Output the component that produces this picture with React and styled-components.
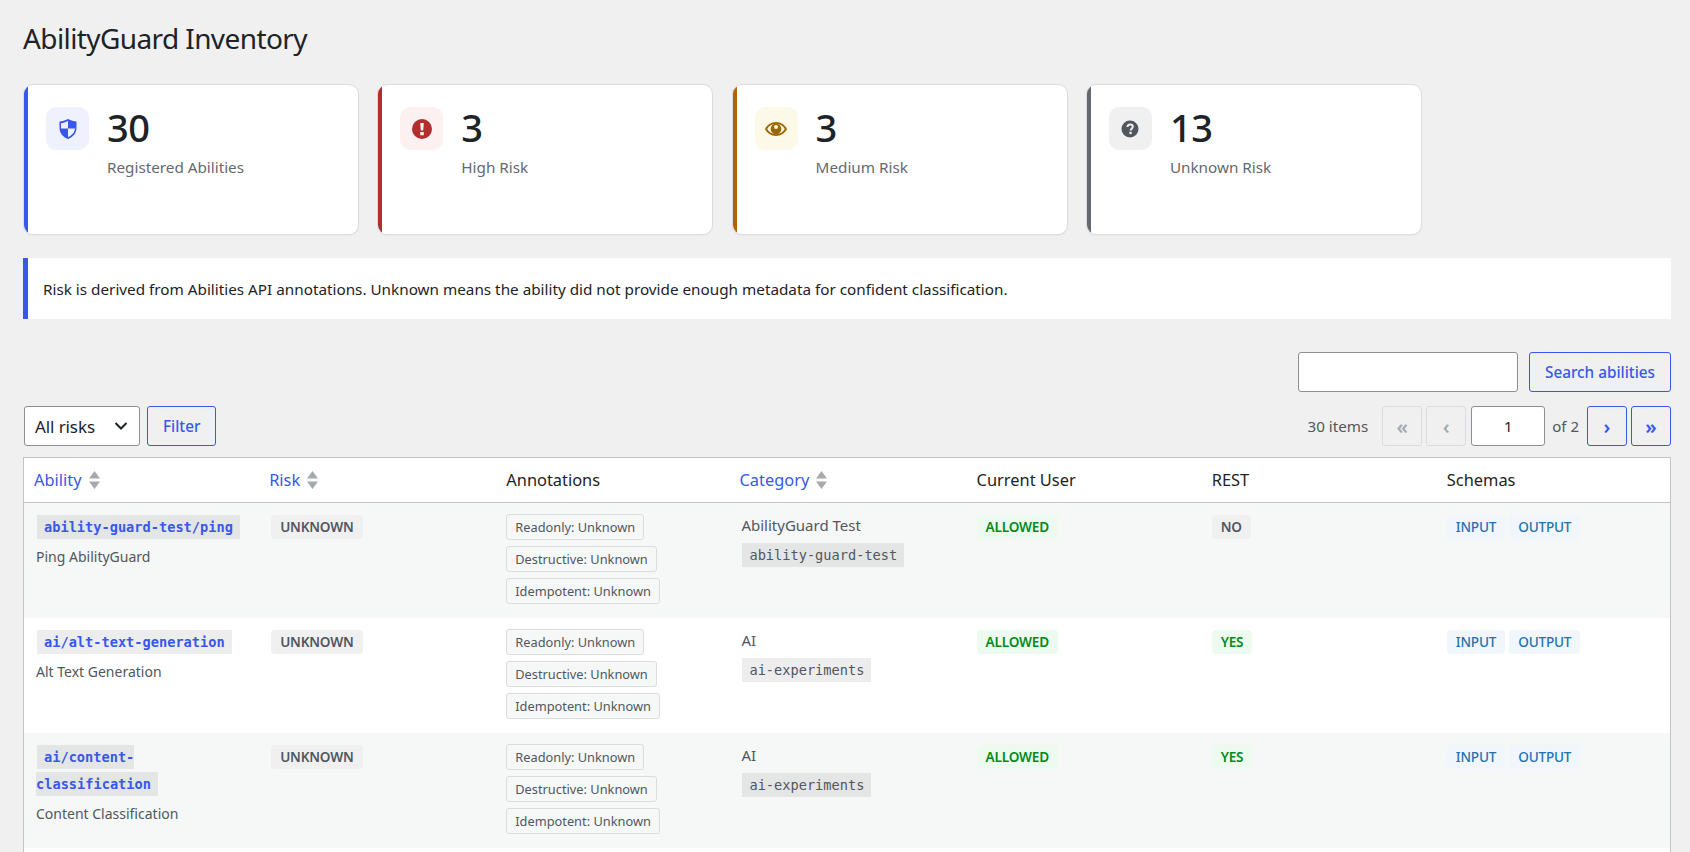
import React from 'react';
import styled, { createGlobalStyle } from 'styled-components';

const Global = createGlobalStyle`
  html, body { margin: 0; padding: 0; height: 852px; overflow: hidden; background: #f0f0f1; }
  * { box-sizing: border-box; }
  body { font-family: "Noto Sans", "Open Sans", sans-serif; color: #1d2327; }
`;
const Page = styled.div`
  height: 852px; display: flex; flex-direction: column; padding: 0 19px 0 23px; overflow: hidden;
`;
const Title = styled.h1`
  margin: 0; padding: 17px 0 0; height: 84px; font-size: 28px; font-weight: 400; line-height: 42px; color: #1d2327; letter-spacing: -0.6px;
`;
const Cards = styled.div`display: grid; grid-template-columns: repeat(4, 336px); gap: 18.3px;`;
const Card = styled.div`
  position: relative; overflow: hidden;
  height: 151px; background: #fff; border: 1px solid #dcdcde;
  border-radius: 10px; padding: 22px 18px 22px 22px; display: flex; gap: 18px; align-items: flex-start;
  box-shadow: 0 1px 2px rgba(0,0,0,.04);
  &::before { content: ""; position: absolute; left: -1px; top: -1px; bottom: -1px; width: 5px; background: ${p => p.$accent}; }
`;
const IconTile = styled.div`
  width: 43px; height: 43px; border-radius: 10px; background: ${p => p.$bg}; color: ${p => p.$fg};
  display: flex; align-items: center; justify-content: center; flex: none;
`;
const Metric = styled.div`display: flex; flex-direction: column;`;
const Num = styled.div`font-size: 38px; line-height: 41px; font-weight: 500; color: #1d2327; letter-spacing: -0.5px;`;
const Label = styled.div`font-size: 15.25px; line-height: 22px; margin-top: 8px; color: #646970;`;
const Notice = styled.div`
  margin-top: 23px; height: 61px; background: #fff; border-left: 5px solid #3858e9; padding: 0 15px;
  display: flex; align-items: center; font-size: 15.27px; color: #1d2327;
`;
const SearchRow = styled.div`margin-top: 33px; display: flex; justify-content: flex-end; gap: 11px;`;
const TextInput = styled.input`
  height: 40px; width: ${p => p.$w}px; border: 1px solid #8c8f94; border-radius: 3px; background: #fff;
  margin: 0 0 0 ${p => p.$center ? 1 : 0}px;
  font: inherit; font-size: 15px; color: #1d2327; text-align: ${p => p.$center ? 'center' : 'left'}; padding: 0 8px;
`;
const Btn = styled.button`
  height: 40px; min-width: ${p => p.$min || 0}px; padding: 0 ${p => p.$pad ?? 15}px; border-radius: 3px; background: transparent;
  border: 1px solid ${p => p.disabled ? '#dcdcde' : '#3858e9'}; color: ${p => p.disabled ? '#a7aaad' : '#3858e9'};
  font: inherit; font-size: ${p => p.$glyph ? 20 : 15.3}px; font-weight: ${p => p.$glyph ? 600 : 500}; display: inline-flex; align-items: center; justify-content: center;
`;
const ToolRow = styled.div`margin-top: 14px; display: flex; align-items: center; justify-content: space-between;`;
const Left = styled.div`display: flex; gap: 7px; margin-left: 1px;`;
const Right = styled.div`display: flex; align-items: center; gap: 4px; font-size: 15px; color: #50575e;`;
const Count = styled.span`margin-right: 10px; font-size: 15.2px;`;
const Of = styled.span`margin: 0 4px 0 3px;`;
const FakeSelect = styled.div`
  height: 40px; width: 116px; border: 1px solid #8c8f94; border-radius: 3px; background: #fff; color: #1d2327; font-size: 17px; letter-spacing: -0.1px;
  display: flex; align-items: center; justify-content: space-between; padding: 0 11px 0 10px;
`;
const TableWrap = styled.div`
  margin-top: 11px; flex: 1; background: #fff; border: 1px solid #c3c4c7; border-bottom: none; min-height: 0;
`;
const Table = styled.table`width: 100%; table-layout: fixed; border-collapse: collapse;`;
const Th = styled.th`
  height: 44px; text-align: left; font-weight: 400; font-size: 16.4px; padding: 0 10px 0 ${p => p.$link ? 10 : 12}px; border-bottom: 1px solid #c3c4c7;
  color: ${p => p.$link ? '#3858e9' : '#1d2327'};
`;
const ThInner = styled.span`display: inline-flex; align-items: center; gap: 7px;`;
const Tr = styled.tr`background: ${p => p.$alt ? '#f6f7f7' : '#fff'};`;
const Td = styled.td`vertical-align: top; padding: 11px 10px 11px 12px; font-size: 14px; color: #50575e; height: ${p => p.$tall ? 116 : 115}px;`;
const Code = styled.code`
  font-family: "DejaVu Sans Mono", "Liberation Mono", monospace; font-size: 13.65px; line-height: 27px; padding: 4px 7px; margin: 0 1px;
  background: rgba(0,0,0,.07); color: ${p => p.$link ? '#3858e9' : '#50575e'}; font-weight: ${p => p.$link ? 700 : 400};
`;
const Desc = styled.div`margin-top: 5px; line-height: 22px;`;
const Pill = styled.span`
  display: inline-block; height: 24px; line-height: 24px; margin: 1px 4px 0 0; padding: 0 9px; border-radius: 4px; font-size: 13.6px; letter-spacing: -0.2px; font-weight: ${p => p.$w || 600};
  background: ${p => p.$bg}; color: ${p => p.$fg};
`;
const Chips = styled.div`display: flex; flex-direction: column; align-items: flex-start; gap: 6px;`;
const Chip = styled.span`
  height: 26px; line-height: 24px; padding: 0 8px; border: 1px solid #dcdcde; border-radius: 3px; background: #f6f7f7; font-size: 12.8px; color: #50575e;
`;
const CatName = styled.div`font-size: 15px; line-height: 22px; margin-bottom: 6px;`;

const Sort = () => (
  <svg width="11" height="20" viewBox="0 0 11 20" aria-hidden="true">
    <path d="M5.5 1 L11 8.5 H0 Z M0 11.5 H11 L5.5 19 Z" fill="#a7aaad" />
  </svg>
);
const Shield = () => (
  <svg width="20" height="20" viewBox="0 0 20 20">
    <path fillRule="evenodd" fill="currentColor" d="M10 0 C7 1.6 4 2.4 1.5 2.6 V9 C1.5 14 5 18 10 20 C15 18 18.5 14 18.5 9 V2.6 C16 2.4 13 1.6 10 0 Z M10 2 V9.5 H17 C16.6 13.6 13.6 16.6 10 18.1 V9.5 H3 V4.2 C5.2 4 7.6 3.2 10 2 Z" />
  </svg>
);
const Warn = () => (
  <svg width="20" height="20" viewBox="0 0 20 20">
    <path fillRule="evenodd" fill="currentColor" d="M10 0 A10 10 0 1 0 10 20 A10 10 0 1 0 10 0 Z M8.2 4 H11.8 L11.2 11.5 H8.8 Z M8.2 13 H11.8 V16.2 H8.2 Z" />
  </svg>
);
const Eye = () => (
  <svg width="24" height="24" viewBox="0 0 24 24">
    <path fillRule="evenodd" fill="currentColor" d="M12 5 C17 5 21 8 23 12 C21 16 17 19 12 19 C7 19 3 16 1 12 C3 8 7 5 12 5 Z M12 6.8 C8 6.8 5 9 3.2 12 C5 15 8 17.2 12 17.2 C16 17.2 19 15 20.8 12 C19 9 16 6.8 12 6.8 Z" />
    <path fillRule="evenodd" fill="currentColor" d="M12 6.6 A5.4 5.4 0 1 1 12 17.4 A5.4 5.4 0 1 1 12 6.6 Z M12 8 A2 2 0 0 0 12 12 A2 2 0 0 0 12 8 Z" />
  </svg>
);
const Help = () => (
  <svg width="20" height="20" viewBox="0 0 20 20">
    <circle cx="10" cy="10" r="8.5" fill="currentColor" />
    <path d="M7.4 8 C7.4 6.4 8.5 5.5 10.1 5.5 C11.7 5.5 12.8 6.4 12.8 7.8 C12.8 9.5 10.6 9.8 10.6 11.5" fill="none" stroke="#f0f0f1" strokeWidth="2" />
    <rect x="9.4" y="12.8" width="2.3" height="2.3" fill="#f0f0f1" />
  </svg>
);
const Chev = () => (
  <svg width="14" height="10" viewBox="0 0 14 10"><path d="M1.5 2 L7 7.5 L12.5 2" fill="none" stroke="#1d2327" strokeWidth="2" /></svg>
);

const gray = { $bg: '#f0f0f1', $fg: '#50575e' };
const green = { $bg: '#edfaef', $fg: '#008a20' };
const blue = { $bg: '#f0f6fc', $fg: '#2271b1', $w: 500 };

const cards = [
  { n: 30, l: 'Registered Abilities', a: '#3858e9', bg: '#eff2fe', fg: '#3858e9', I: Shield },
  { n: 3, l: 'High Risk', a: '#b32d2e', bg: '#fcf0f1', fg: '#b32d2e', I: Warn },
  { n: 3, l: 'Medium Risk', a: '#b26200', bg: '#fcf9e8', fg: '#996800', I: Eye },
  { n: 13, l: 'Unknown Risk', a: '#646970', bg: '#f0f0f1', fg: '#50575e', I: Help },
];
const rows = [
  { id: 'ability-guard-test/ping', d: 'Ping AbilityGuard', c: 'AbilityGuard Test', s: 'ability-guard-test', rest: 'NO' },
  { id: 'ai/alt-text-generation', d: 'Alt Text Generation', c: 'AI', s: 'ai-experiments', rest: 'YES' },
  { id: 'ai/content-classification', d: 'Content Classification', c: 'AI', s: 'ai-experiments', rest: 'YES' },
];
const heads = [['Ability', 1], ['Risk', 1], ['Annotations'], ['Category', 1], ['Current User'], ['REST'], ['Schemas']];

export default function App() {
  return (
    <Page>
      <Global />
      <Title>AbilityGuard Inventory</Title>
      <Cards>
        {cards.map(c => (
          <Card key={c.l} $accent={c.a}>
            <IconTile $bg={c.bg} $fg={c.fg}><c.I /></IconTile>
            <Metric><Num>{c.n}</Num><Label>{c.l}</Label></Metric>
          </Card>
        ))}
      </Cards>
      <Notice>Risk is derived from Abilities API annotations. Unknown means the ability did not provide enough metadata for confident classification.</Notice>
      <SearchRow>
        <TextInput $w={220} />
        <Btn>Search abilities</Btn>
      </SearchRow>
      <ToolRow>
        <Left>
          <FakeSelect>All risks <Chev /></FakeSelect>
          <Btn>Filter</Btn>
        </Left>
        <Right>
          <Count>30 items</Count>
          <Btn disabled $glyph $min={40} $pad={0}>«</Btn>
          <Btn disabled $glyph $min={40} $pad={0}>‹</Btn>
          <TextInput $w={74} $center defaultValue="1" />
          <Of>of 2</Of>
          <Btn $glyph $min={40} $pad={0}>›</Btn>
          <Btn $glyph $min={40} $pad={0}>»</Btn>
        </Right>
      </ToolRow>
      <TableWrap>
        <Table>
          <thead>
            <tr>
              {heads.map(([h, s]) => (
                <Th key={h} $link={s}><ThInner>{h}{s && <Sort />}</ThInner></Th>
              ))}
            </tr>
          </thead>
          <tbody>
            {rows.map((r, i) => (
              <Tr key={r.id} $alt={i % 2 === 0}>
                <Td $tall={i === 0}><Code $link>{r.id}</Code><Desc>{r.d}</Desc></Td>
                <Td><Pill {...gray}>UNKNOWN</Pill></Td>
                <Td>
                  <Chips>
                    <Chip>Readonly: Unknown</Chip>
                    <Chip>Destructive: Unknown</Chip>
                    <Chip>Idempotent: Unknown</Chip>
                  </Chips>
                </Td>
                <Td><CatName>{r.c}</CatName><Code>{r.s}</Code></Td>
                <Td><Pill {...green}>ALLOWED</Pill></Td>
                <Td><Pill {...(r.rest === 'YES' ? green : gray)}>{r.rest}</Pill></Td>
                <Td><Pill {...blue}>INPUT</Pill><Pill {...blue}>OUTPUT</Pill></Td>
              </Tr>
            ))}
          </tbody>
        </Table>
      </TableWrap>
    </Page>
  );
}
